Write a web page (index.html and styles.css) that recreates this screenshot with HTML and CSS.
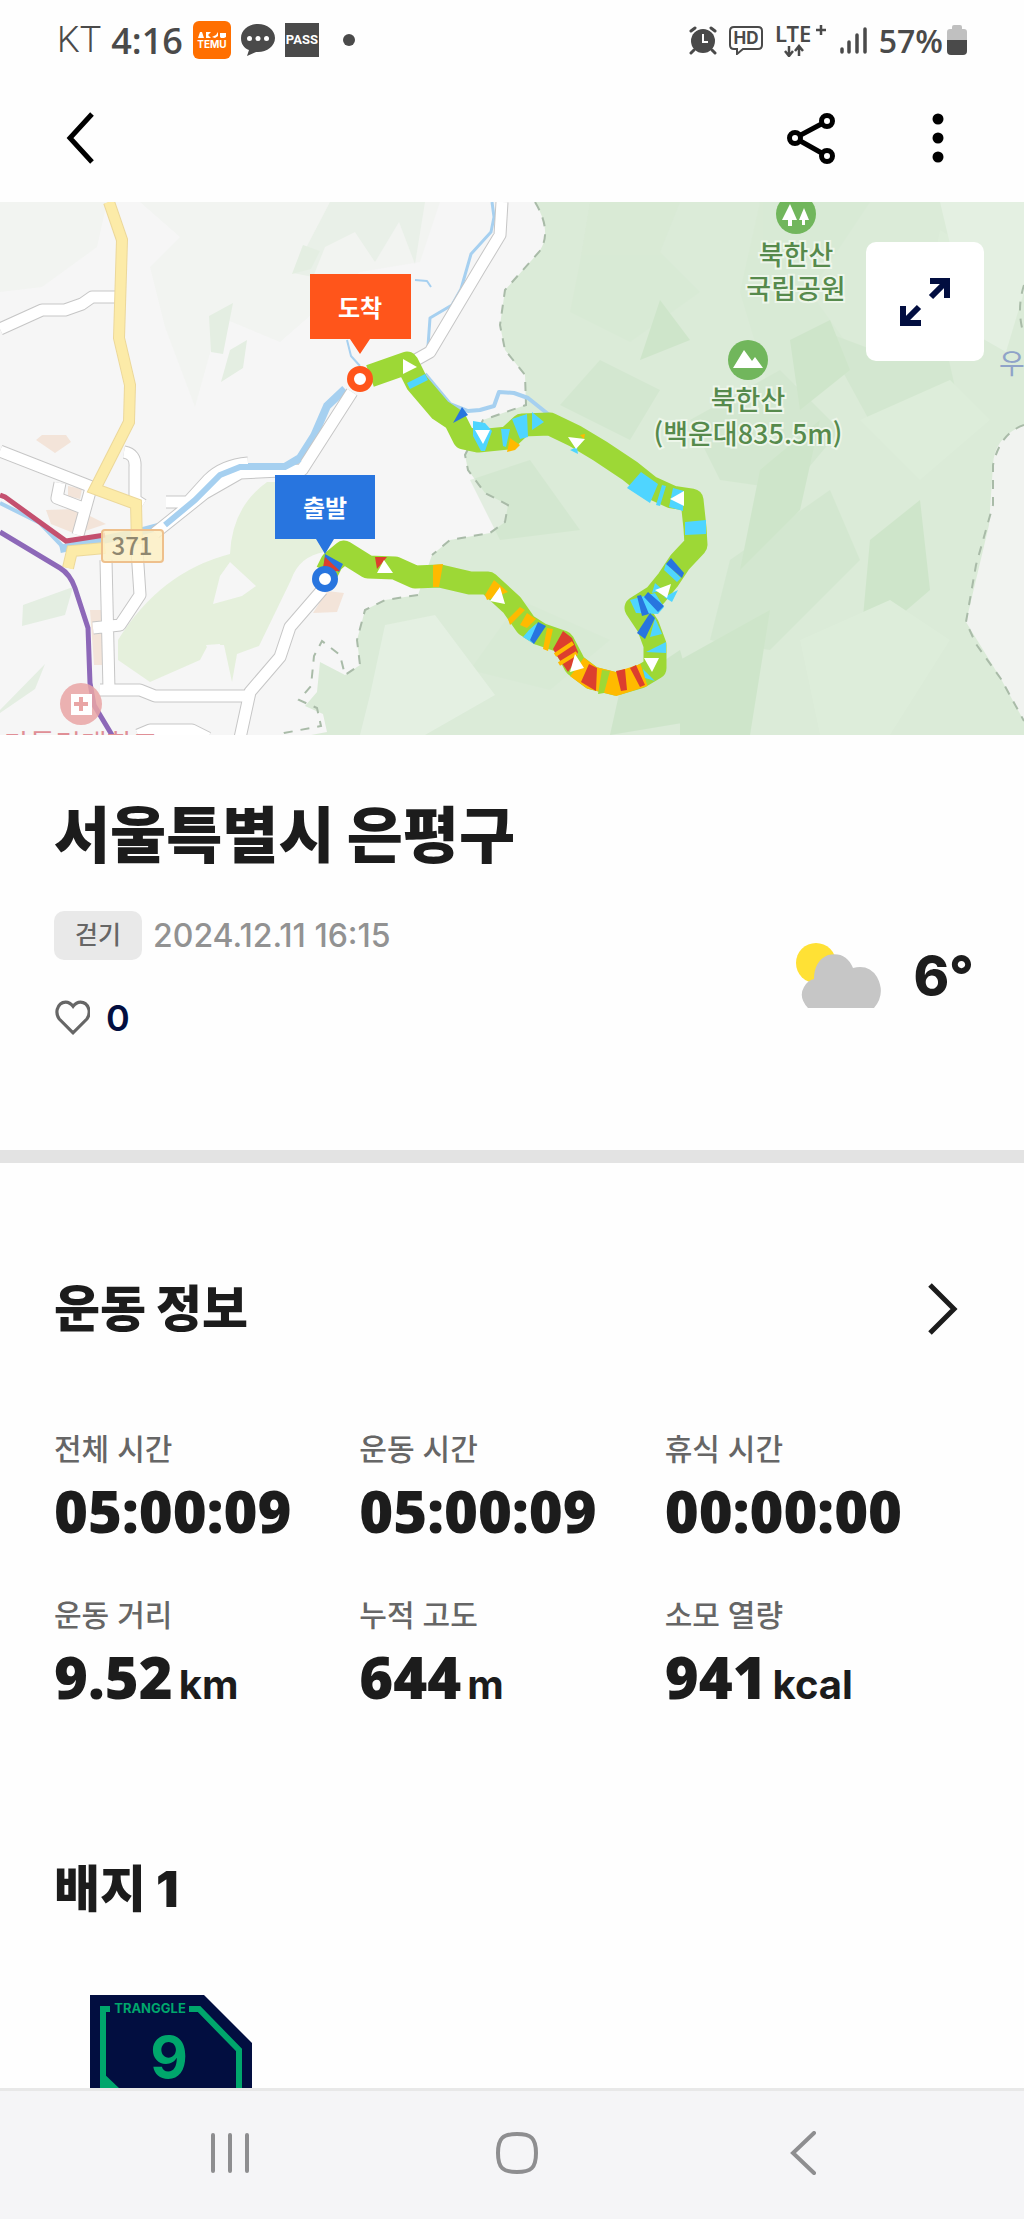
FILE: index.html
```html
<!DOCTYPE html>
<html lang="ko">
<head>
    <meta charset="UTF-8">
    <meta name="viewport" content="width=device-width, initial-scale=1.0">
    <title>서울특별시 은평구</title>
    <link rel="stylesheet" href="styles.css">
</head>
<body>
    <div class="status-bar">
        <div class="status-left">
            <span class="carrier">KT</span>
            <span class="clock">4:16</span>
            <svg width="38" height="38" viewBox="0 0 38 38">
                <rect width="38" height="38" rx="6" fill="#ff6f00"/>
                <path d="M5 17l2-6h2l2 6zM13 11h5l-3 3 3 3h-5zM19 16l4-2 2-3v4l-3 2zM27 12h6v4l-2 1h-3l-1-1z" fill="#fff"/>
                <text x="19" y="27" text-anchor="middle" class="temu-text">TEMU</text>
            </svg>
            <svg width="34" height="34" viewBox="0 0 34 34">
                <path d="M17 1C8 1 0 7 0 15c0 6 3 10 8 12l-2 6 9-4h2c9 0 17-6 17-14S26 1 17 1z" fill="#4a4a4a"/>
                <circle cx="8.500" cy="15.500" r="2.500" fill="#fff"/>
                <circle cx="17" cy="15.500" r="2.500" fill="#fff"/>
                <circle cx="25.500" cy="15.500" r="2.500" fill="#fff"/>
            </svg>
            <span class="pass">PASS</span>
            <span class="dot"></span>
        </div>
        <div class="status-right">
            <svg width="28" height="30" viewBox="0 0 28 30">
                <circle cx="14" cy="16" r="12" fill="#4a4a4a"/>
                <path d="M2 6l4-3M26 6l-4-3M5 25l-3 3M23 25l3 3" stroke="#4a4a4a" stroke-width="3" stroke-linecap="round"/>
                <path d="M14 9v8h5" fill="none" stroke="#fff" stroke-width="2"/>
            </svg>
            <svg width="34" height="30" viewBox="0 0 34 30">
                <path d="M5 2h24q4 0 4 4v14q0 4-4 4H14l-6 5v-5H5q-4 0-4-4V6q0-4 4-4z" fill="none" stroke="#4a4a4a" stroke-width="2"/>
                <text x="17" y="19" text-anchor="middle" class="hd-text">HD</text>
            </svg>
            <svg width="52" height="34" viewBox="0 0 52 34">
                <text x="0" y="19" class="lte-text">LTE</text>
                <path d="M41 7h10M46 2v10" stroke="#4a4a4a" stroke-width="2.500"/>
                <path d="M14 23v9M10 28l4 5 4-5M24 33v-9M20 28l4-5 4 5" fill="none" stroke="#4a4a4a" stroke-width="2.500"/>
            </svg>
            <svg width="28" height="28" viewBox="0 0 28 28">
                <path d="M3 23v3M10 16v10M18 9v17M26 3v23" stroke="#4a4a4a" stroke-width="3.500" stroke-linecap="round"/>
            </svg>
            <span class="battery">
                <span class="percent">57%</span>
                <svg width="20" height="30" viewBox="0 0 20 30">
                    <path d="M5 2q0-2 2-2h6q2 0 2 2v2h2q3 0 3 3v9H0V7q0-3 3-3h2z" fill="#c0c0c0"/>
                    <path d="M0 15h20v11q0 4-4 4H4q-4 0-4-4z" fill="#4a4a4a"/>
                </svg>
            </span>
        </div>
    </div>

    <header class="top-bar">
        <button aria-label="뒤로">
            <svg width="30" height="54" viewBox="0 0 30 54">
                <path d="M26 3L4 27l22 24" fill="none" stroke="#000" stroke-width="5"/>
            </svg>
        </button>
        <div class="top-actions">
            <button aria-label="공유">
                <svg width="50" height="54" viewBox="0 0 50 54">
                    <path d="M41 10L9 27l32 18" fill="none" stroke="#000" stroke-width="5"/>
                    <g fill="#fff" stroke="#000" stroke-width="5">
                        <circle cx="41" cy="10" r="5.500"/>
                        <circle cx="9" cy="27" r="5.500"/>
                        <circle cx="41" cy="45" r="5.500"/>
                    </g>
                </svg>
            </button>
            <button aria-label="더보기">
                <svg width="12" height="50" viewBox="0 0 12 50">
                    <circle cx="6" cy="6" r="5.500"/>
                    <circle cx="6" cy="25" r="5.500"/>
                    <circle cx="6" cy="44" r="5.500"/>
                </svg>
            </button>
        </div>
    </header>

    <main class="content">
        <div class="map">
            <svg class="map-svg" viewBox="0 202 1024 533" role="img" aria-label="경로 지도">
                <rect y="202" width="1024" height="533" fill="#f6f6f6"/>
                <!-- soft terrain -->
                <path d="M0 202h107l-10 45-55 40-42 5zM140 202h300l-20 60-60 10-80 70-60-25-25 90-30-80-15-60 30-30z" fill="#f2f4f1"/>
                <path d="M330 202h95l-10 62-16-42-24 40-20-30-30 15-12 30-20-4z" fill="#e9f0e8"/>
                <path d="M209 316l24-13-10 51-12-2zM230 350l17-10-4 28-22 14zM303 245l17 6-9 18-19 5zM23 605l50-18-8 28-43 11zM0 710l45-46-10 25-35 24z" fill="#e4eee2"/>

                <!-- national park -->
                <path d="M535 202q18 30 4 50l-34 38-5 35 5 25 20 25 1 30-43 15-18 35 3 15 17 23 23 12-3 17-15 11-40 7-18 15-14 40-33 5-20 10-8 30 3 25-15 10-25-13-3 30-12 14 18 8 4 18-37 7-20 10H1024V202z" fill="#dbebd8"/>
                <g opacity="0.450">
                    <path d="M590 202h90l-20 50 40 40-70 50-60-30 10-50zM520 600l90 40-60 50-80-20zM760 202h110l-60 90 50 70-90 30-30-100z" fill="#d6e9d3"/>
                    <path d="M600 360l60 30-30 50-70-35zM690 420l90-50 60 60-50 60-70-10zM730 560l100-70 30 70-90 90-60-10zM470 480l60-20 50 70-80 10zM820 330l80 30 40-40 20 90-80 30z" fill="#cbe4c7"/>
                    <path d="M760 470l60-50-20 90-60 60zM790 340l40-20 20 50-50 40zM660 300l30 40-50 20zM620 690l60-40 20 70-90 15zM680 660l90-50-20 125h-70zM870 540l50-40 10 90-70 60z" fill="#bfdfba"/>
                    <path d="M860 420l90-40 40 40-70 60zM800 640l90-40 60 40-60 95h-70zM940 230l50 30-10 80-50-60z" fill="#e1f1de"/>
                </g>
                <path d="M1024 425q-30 12-31 40l-4 60-23 97 35 57 23 42z" fill="#f1f3f0"/>
                <path d="M940 202h84v90l-18 60-35-20zM385 625l50-10 60 80-70 40h-65l10-40z" fill="#e4f0e2"/>
                <g fill="none" stroke="#a9bba8" stroke-width="2" stroke-dasharray="9 8">
                    <path d="M535 202q18 30 4 50l-34 38-5 35 5 25 20 25 1 30-43 15-18 35 3 15 17 23 23 12-3 17-15 11-40 7-18 15M418 595l-33 5-20 10-8 30 3 25-15 10-5-20-18-14-8 15-3 30-12 14 18 8 4 18-37 7-20 8"/>
                    <path d="M1024 425q-24 8-31 40v40l-17 60-10 57 10 22 25 35 23 42M1024 285q-8 25 0 50"/>
                </g>

                <!-- green and built areas on the left -->
                <path d="M267 482q-35 25-37 72-70 18-112 86v20l32 22 50-22 8-15h16l8 37 5-28 22-8 32-66q8-24 34-28v-70z" fill="#e5f0dc"/>
                <path d="M213 604l7-28 10-14 26 24-14 10zM206 645l14-1 4 28-8-5z" fill="#f6f6f6"/>
                <path d="M36 440l6-5h24l5 7-16 11zM46 510l30-1 30 15-30 10-25-10zM68 486l14 3-2 10-12-3zM90 610h12v55h-8zM313 613l14-22 17 2-7 19z" fill="#f3e4d9"/>

                <!-- rivers -->
                <g fill="none" stroke="#a6d0f0" stroke-linejoin="round">
                    <path d="M492 202l2 15-3 15-20 22-10 35-9 16-22 13-2 28" stroke-width="3"/>
                    <path d="M345 389l-18 17-13 30-14 22-15 9h-45l-20 8-25 25-30 25-30 8-75 16" stroke-width="8"/>
                    <path d="M0 503l40 20 25 26h35" stroke-width="4"/>
                    <path d="M425 374l25 30 18 7 12-1 14-4 5-14 15 1 14 5 25 20 12 6" stroke-width="4"/>
                    <path d="M347 340l4 16 9 10M415 280l12 1 4 6" stroke-width="2"/>
                </g>

                <!-- roads: casing, then surface -->
                <g fill="none" stroke="#c6c6c6" stroke-width="13" stroke-linejoin="round">
                    <path d="M0 329l42-19h23l17-6 10-7h28M0 451l92 36M60 483l-3 15 26 10M91 488L78 535M124 452q12 2 11 15v33l8 5M136 535l4 60-20 30-27 3M106 560l3 130M100 690h40l15 6h90M502 202l-2 33-20 33-50 84-25 14M352 392l-50 78-62 3-35 20-50 40M248 463q-25 2-40 17l-20 22-22 0M322 590l-32 37-10 30-30 35-10 46M138 735l12-5h42l16 8"/>
                </g>
                <g fill="none" stroke="#fff" stroke-width="11" stroke-linejoin="round">
                    <path d="M0 329l42-19h23l17-6 10-7h28M0 451l92 36M60 483l-3 15 26 10M91 488L78 535M124 452q12 2 11 15v33l8 5M136 535l4 60-20 30-27 3M106 560l3 130M100 690h40l15 6h90M502 202l-2 33-20 33-50 84-25 14M352 392l-50 78-62 3-35 20-50 40M248 463q-25 2-40 17l-20 22-22 0M322 590l-32 37-10 30-30 35-10 46M138 735l12-5h42l16 8"/>
                </g>
                <path d="M300 459l-15 8h-45l-20 8-25 25-30 25" fill="none" stroke="#a6d0f0" stroke-width="6"/>
                <path d="M109 202l13 38-3 98 11 47-1 37-34 67 41 15 1 40M105 548l-33 3-4 17" fill="none" stroke="#ecd89a" stroke-width="12"/>
                <path d="M109 202l13 38-3 98 11 47-1 37-34 67 41 15 1 40M105 548l-33 3-4 17" fill="none" stroke="#fceba8" stroke-width="10"/>
                <path d="M0 495l5 2 61 44 39-6" fill="none" stroke="#c4506f" stroke-width="5"/>
                <path d="M0 532l60 36q10 6 15 20l13 40 2 55 4 22 18 30" fill="none" stroke="#8d68b8" stroke-width="5"/>

                <rect x="102" y="530" width="61" height="32" rx="3" fill="#fdf0c4" fill-opacity="0.850" stroke="#eec08c" stroke-width="2"/>
                <text x="132" y="555" text-anchor="middle" class="road-no">371</text>

                <circle cx="81" cy="704" r="21" fill="#e9a5a5" fill-opacity="0.850"/>
                <rect x="71" y="694" width="21" height="21" fill="#fff"/>
                <path d="M81 697v14M74 704h14" stroke="#e9a5a5" stroke-width="4"/>
                <text x="81" y="755" text-anchor="middle" class="hospital">가톨릭대학교</text>

                <!-- track -->
                <path d="M370 376L407 363 417 383 440 410 455 420 464 438 478 441 508 438 522 425 550 424 575 436 600 451 630 471 650 487 672 497 692 500 695 528 696 545 680 562 668 580 655 596 636 608 648 626 655 645 655 668 640 677 616 684 592 678 575 665 563 642 540 634 526 625 512 605 488 583 470 583 440 576 415 577 395 568 368 567 344 552 332 562 327 572" fill="none" stroke="#9dd836" stroke-width="23" stroke-linejoin="round"/>
                <path d="M577 667L592 678 616 684 644 675" fill="none" stroke="#ffba00" stroke-width="23"/>
                <g fill="#4fd5ff">
                    <path d="M407 383l18-9 3 6-18 9zM473 421l12 2 7 8-7 20h-4l-8-15zM501 429h9l-4 18-3-1zM512 419l15-5 1 23-8 2zM532 412l12 10-12 8zM570 450l8 4-1-7z"/>
                    <path d="M641 472l17 12-8 19-23-15zM662 485l4 1-6 20-4-1zM673 488l11 3-1 20-14-4zM685 522l21-2v14l-21 1zM666 563l15 15-4 4-13-12zM655 583l8 7-11 3zM678 590l-6 12-8-5zM630 600l25-7 9 14-6 7-22-1zM655 618l7 16-12 3zM666 642v11l-20-1zM643 669l12 12-10-3zM529 630l8-7-3 21-11-7z"/>
                </g>
                <g fill="#2875df">
                    <path d="M462 407l6 8-15 8zM671 558l13 15-2 5-16-14zM648 592l16 14-6 6-14-15zM637 596l4-1 8 19-7 2zM650 613l5 5-10 21-8-6zM538 622l8 4-12 18-4-4zM325 554l18 10-4 8-15-9z"/>
                </g>
                <g fill="#ffba00">
                    <path d="M510 438l10 7-5 5-8 2zM580 435l5-1-1 5zM433 565l10-1-4 23h-6zM494 580l14 12-21 8-2-5zM520 607l5 3-15 15-2-6zM527 613l9 6-9 9-7-3zM547 628l6 1-5 22-5-2z"/>
                </g>
                <g fill="#dc3f2e">
                    <path d="M375 557h12l-10 12zM325 557l15 14-18 1zM563 631l9 7 6 14-6 14-4 6-11-16-4-7zM589 664l8 4-1 23-15-9zM616 671l9-2 2 21-6 1zM630 668l6-3 9 20-5 2z"/>
                </g>
                <path d="M555 655l18-12M559 664l18-11" stroke="#ffba00" stroke-width="4"/>
                <path d="M602 670l8 1-6 22-6 1z" fill="#9dd836"/>
                <path d="M403 359l14 8-14 7zM475 430h15l-7 14zM568 437l17 2-9 10zM670 499l14-8v15zM655 590l16-6-4 14zM644 658h15l-7 14zM570 672l5-18 9 14zM500 587l5 17-15-3zM384 560l9 13h-16z" fill="#fff"/>

                <!-- pins -->
                <path d="M310 274h101v65h-41l-10 15-10-15h-40z" fill="#ff551b"/>
                <path d="M275 475h100v64h-41l-9 15-9-15h-41z" fill="#2875df"/>
                <circle cx="360" cy="379" r="9.500" fill="#fff" stroke="#ff551b" stroke-width="7"/>
                <circle cx="325" cy="579" r="9.500" fill="#fff" stroke="#2875df" stroke-width="7"/>
                <text x="360" y="317" text-anchor="middle" class="pin-text">도착</text>
                <text x="325" y="517" text-anchor="middle" class="pin-text">출발</text>

                <!-- places -->
                <circle cx="796" cy="214" r="20" fill="#71b65c"/>
                <path d="M790 204l7 16h-5v6h-4v-6h-6zM804 208l5 12h-4v5h-3v-5h-3z" fill="#fff"/>
                <text x="796" y="265" text-anchor="middle" class="place">북한산</text>
                <text x="796" y="299" text-anchor="middle" class="place">국립공원</text>
                <circle cx="748" cy="360" r="20" fill="#71b65c"/>
                <path d="M733 368l11-18 8 11 3-4 8 11z" fill="#fff"/>
                <text x="748" y="410" text-anchor="middle" class="place">북한산</text>
                <text x="748" y="444" text-anchor="middle" class="place">(백운대835.5m)</text>
                <text x="999" y="374" class="town">우</text>
            </svg>
            <button class="expand-btn" aria-label="지도 확대">
                <svg width="50" height="50" viewBox="0 0 50 50">
                    <path d="M31 20L45 6M30 4h17v17M19 30L5 44M3 29v17h18" fill="none" stroke="#020e40" stroke-width="6"/>
                </svg>
            </button>
        </div>

        <section class="summary">
            <h1>서울특별시 은평구</h1>
            <div class="summary-row">
                <div>
                    <div class="meta">
                        <span class="tag">걷기</span>
                        <time datetime="2024-12-11T16:15">2024.12.11 16:15</time>
                    </div>
                    <button class="like-btn" aria-label="좋아요 0">
                        <svg width="36" height="36" viewBox="0 0 34 34">
                            <path d="M18 31L5 18Q2 14 3 9q2-7 8-7 4 0 7 4 3-4 7-4 6 0 8 7 1 5-2 9z" fill="none" stroke="#666" stroke-width="3"/>
                        </svg>
                        <span>0</span>
                    </button>
                </div>
                <div class="weather">
                    <svg width="88" height="66" viewBox="0 0 88 66">
                        <circle cx="21" cy="20" r="20" fill="#ffe135"/>
                        <path d="M13 65Q3 54 9 44q4-7 10-8Q19 18 33 12q18-4 25 13 16-4 24 9 9 17-3 31z" fill="#c6c6c6"/>
                    </svg>
                    <span>6°</span>
                </div>
            </div>
        </section>

        <section class="workout">
            <a class="section-link" href="#workout">
                <h2>운동 정보</h2>
                <svg width="30" height="54" viewBox="0 0 30 54">
                    <path d="M2 3l24 24L2 51" fill="none" stroke="#1c1c1c" stroke-width="5"/>
                </svg>
            </a>
            <dl class="stats" id="workout">
                <div><dt>전체 시간</dt><dd>05:00:09</dd></div>
                <div><dt>운동 시간</dt><dd>05:00:09</dd></div>
                <div><dt>휴식 시간</dt><dd>00:00:00</dd></div>
                <div><dt>운동 거리</dt><dd>9.52<small>km</small></dd></div>
                <div><dt>누적 고도</dt><dd>644<small>m</small></dd></div>
                <div><dt>소모 열량</dt><dd>941<small>kcal</small></dd></div>
            </dl>
        </section>

        <section class="badges">
            <h2>배지 1</h2>
            <svg class="badge" width="162" height="162" viewBox="0 0 162 162">
                <path d="M0 0h114l48 48v114H0z" fill="#020e40"/>
                <path d="M20 14h-7v140M99 14h10l40 41v100" fill="none" stroke="#00a66c" stroke-width="6"/>
                <path d="M10 75l40 38v45H10z" fill="#00a66c"/>
                <text x="60" y="18" text-anchor="middle" class="badge-name">TRANGGLE</text>
                <text x="79" y="83" text-anchor="middle" class="badge-no">9</text>
                <text x="125" y="112" text-anchor="middle" class="badge-unit">KM</text>
            </svg>
        </section>
    </main>

    <nav class="nav-bar">
        <button aria-label="최근 앱">
            <svg width="44" height="44" viewBox="0 0 44 44">
                <path d="M5 4v36M22 4v36M39 4v36" stroke="#8e8e90" stroke-width="4" stroke-linecap="round"/>
            </svg>
        </button>
        <button aria-label="홈">
            <svg width="44" height="44" viewBox="0 0 44 44">
                <path d="M22 3c14 0 19 4 19 19s-5 19-19 19S3 37 3 22 8 3 22 3z" fill="none" stroke="#8e8e90" stroke-width="4"/>
            </svg>
        </button>
        <button aria-label="이전">
            <svg width="44" height="44" viewBox="0 0 44 44">
                <path d="M33 2L12 22l21 20" fill="none" stroke="#8e8e90" stroke-width="4" stroke-linecap="round"/>
            </svg>
        </button>
    </nav>
</body>
</html>
```

FILE: styles.css
```css
* {
    box-sizing: border-box;
}
body {
    margin: 0;
    height: 100vh;
    display: flex;
    flex-direction: column;
    background: #fefefe;
    color: #1c1c1c;
    font-family: Inter, "Noto Sans CJK KR", sans-serif;
}
h1, h2, dl, dd {
    margin: 0;
}
svg {
    display: block;
    flex-shrink: 0;
}
button {
    font: inherit;
    color: inherit;
    border: none;
    background: none;
    padding: 0;
    cursor: pointer;
}

/* status bar */
.status-bar {
    display: flex;
    justify-content: space-between;
    align-items: center;
    height: 80px;
    flex-shrink: 0;
    padding: 0 57px;
    color: #4a4a4a;
}
.status-left,
.status-right {
    display: flex;
    align-items: center;
    gap: 10px;
}
.status-right {
    gap: 12px;
}
.carrier {
    font: 300 36px Roboto, sans-serif;
}
.clock,
.percent {
    font: 600 36px "Open Sans", sans-serif;
}
.percent {
    font-size: 32px;
}
.battery {
    display: flex;
    align-items: center;
    gap: 4px;
}
.temu-text {
    font: 700 10px Inter, sans-serif;
    fill: #fff;
}
.hd-text {
    font: 700 17px Inter, sans-serif;
    fill: #4a4a4a;
}
.lte-text {
    font: 600 22px "Noto Sans", sans-serif;
    fill: #4a4a4a;
}
.pass {
    background: #4a4a4a;
    color: #fff;
    font: 700 13px/34px Roboto, sans-serif;
    width: 34px;
    text-align: center;
}
.dot {
    width: 12px;
    height: 12px;
    margin-left: 14px;
    border-radius: 50%;
    background: #4a4a4a;
}

/* top bar */
.top-bar {
    display: flex;
    justify-content: space-between;
    align-items: center;
    flex-shrink: 0;
    height: 122px;
    padding: 0 80px 6px 66px;
}
.top-actions {
    display: flex;
    align-items: center;
    gap: 96px;
}
.content {
    flex: 1;
    min-height: 0;
    overflow: hidden;
}

/* map */
.map {
    position: relative;
}
.map-svg {
    width: 100%;
    font-family: "Noto Sans CJK KR", sans-serif;
}
.road-no {
    font-size: 24px;
    font-weight: 500;
    fill: #8f8770;
}
.hospital {
    font-size: 28px;
    fill: #e08f96;
}
.pin-text {
    font-size: 24px;
    font-weight: 700;
    fill: #fff;
}
.place {
    font-size: 27px;
    font-weight: 500;
    fill: #568a4c;
    stroke: #edf6ea;
    stroke-width: 4px;
    paint-order: stroke;
}
.town {
    font-size: 28px;
    fill: #8fa3c8;
}
.expand-btn {
    position: absolute;
    top: 40px;
    right: 40px;
    width: 118px;
    height: 119px;
    display: flex;
    align-items: center;
    justify-content: center;
    background: #fff;
    border-radius: 10px;
}

/* summary */
.summary {
    padding: 60px 50px 110px 54px;
    border-bottom: 13px solid #e3e3e3;
}
h1 {
    font-size: 61px;
    line-height: 82px;
    font-weight: 900;
}
.summary-row {
    display: flex;
    justify-content: space-between;
    align-items: center;
    margin-top: 34px;
}
.meta {
    display: flex;
    align-items: center;
    gap: 11px;
}
.tag {
    padding: 0 21px;
    border-radius: 10px;
    background: #e9e9e9;
    color: #666;
    font-size: 25px;
    line-height: 49px;
    font-weight: 500;
}
time {
    color: #929292;
    font-size: 32px;
    font-weight: 500;
}
.like-btn {
    display: flex;
    align-items: center;
    gap: 16px;
    margin-top: 36px;
    color: #020e40;
    font-size: 36px;
    line-height: 44px;
    font-weight: 600;
}
.weather {
    display: flex;
    align-items: center;
    gap: 30px;
    font-size: 54px;
    line-height: 60px;
    font-weight: 800;
}

/* workout */
.workout {
    padding: 110px 54px 0;
}
.section-link {
    display: flex;
    justify-content: space-between;
    align-items: center;
    padding-right: 12px;
    color: inherit;
    text-decoration: none;
}
h2 {
    font-size: 50px;
    line-height: 72px;
    font-weight: 900;
}
.stats {
    display: grid;
    grid-template-columns: repeat(3, 1fr);
    row-gap: 48px;
    margin-top: 82px;
}
.stats dt {
    color: #666;
    font-size: 30px;
    line-height: 44px;
    font-weight: 500;
}
.stats dd {
    margin-top: 6px;
    font-family: "Open Sans", sans-serif;
    font-size: 58px;
    line-height: 68px;
    font-weight: 800;
}
.stats small {
    margin-left: 6px;
    font-family: Inter, sans-serif;
    font-size: 40px;
    line-height: 40px;
    font-weight: 700;
}

/* badges */
.badges {
    padding: 142px 54px 0;
}
.badge {
    margin: 70px 0 0 36px;
}
.badge-name,
.badge-no,
.badge-unit {
    font: 700 13px Inter, sans-serif;
    fill: #00a66c;
}
.badge-no {
    font-size: 58px;
}
.badge-unit {
    font-size: 24px;
}

/* navigation bar */
.nav-bar {
    display: flex;
    justify-content: space-between;
    align-items: center;
    flex-shrink: 0;
    height: 131px;
    padding: 0 199px 4px 208px;
    background: #f5f5f7;
    border-top: 3px solid #e8e8e8;
}
```
